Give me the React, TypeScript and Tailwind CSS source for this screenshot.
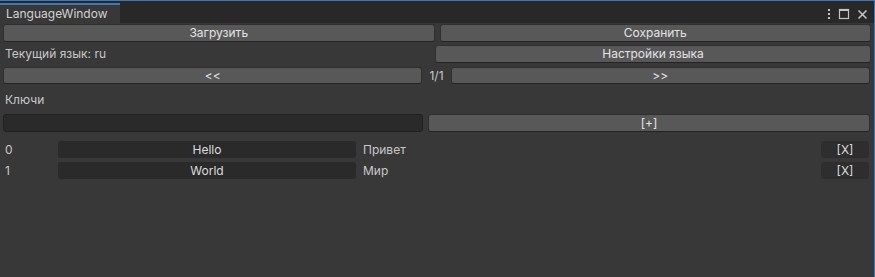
import React from 'react';

const font = { fontFamily: 'Inter, "Noto Sans", sans-serif' };

function Btn({ children, className = '' }: { children: React.ReactNode; className?: string }) {
  return (
    <div
      className={`flex items-center justify-center rounded-[3px] border border-[#303030] border-b-[#242424] bg-[#585858] text-[12px] text-[#e4e4e4] ${className}`}
    >
      {children}
    </div>
  );
}

function KeyRow({ index, keyName, value }: { index: number; keyName: string; value: string }) {
  return (
    <div className="flex h-[17px] items-center pl-[5px] pr-[5px]">
      <div className="w-[53px] text-[12px] text-[#c8c8c8]">{index}</div>
      <div className="flex h-full w-[298px] items-center justify-center rounded-[3px] bg-[#2a2a2a] text-[12px] text-[#dcdcdc]">
        {keyName}
      </div>
      <div className="ml-[7px] flex-1 text-[12px] text-[#c8c8c8]">{value}</div>
      <div className="flex h-full w-[48px] items-center justify-center rounded-[3px] bg-[#2e2e2e] text-[12px] text-[#dcdcdc]">
        [X]
      </div>
    </div>
  );
}

function App() {
  return (
    <div className="flex h-[277px] w-[875px] flex-col overflow-hidden border-t border-r border-[#3a79bb] bg-[#383838]" style={font}>
      {/* tab bar */}
      <div className="flex h-[22px] items-end bg-[#282828]">
        <div className="flex h-[20px] w-[120px] items-center border-t-2 border-[#3a79bb] bg-[#383838] pl-[6px] text-[12px] text-[#d2d2d2]">
          LanguageWindow
        </div>
        <div className="flex-1" />
        <div className="mb-[3px] mr-[6px] flex items-center gap-[7px] text-[#c4c4c4]">
          <svg width="4" height="12" viewBox="0 0 4 12">
            <rect x="1" y="1" width="2" height="2" fill="currentColor" />
            <rect x="1" y="5" width="2" height="2" fill="currentColor" />
            <rect x="1" y="9" width="2" height="2" fill="currentColor" />
          </svg>
          <svg width="12" height="12" viewBox="0 0 12 12">
            <rect x="1.5" y="1.5" width="9" height="9" fill="none" stroke="currentColor" strokeWidth="1.2" />
            <rect x="1" y="1" width="10" height="2" fill="currentColor" />
          </svg>
          <svg width="11" height="11" viewBox="0 0 11 11">
            <path d="M1.5 1.5 L9.5 9.5 M9.5 1.5 L1.5 9.5" stroke="currentColor" strokeWidth="1.6" />
          </svg>
        </div>
      </div>

      {/* load / save */}
      <div className="mt-[1px] flex h-[18px] gap-[5px] pl-[3px] pr-[3px]">
        <Btn className="flex-1">Загрузить</Btn>
        <Btn className="flex-1">Сохранить</Btn>
      </div>

      {/* current language */}
      <div className="mt-[3px] flex h-[18px] items-center pl-[5px] pr-[3px]">
        <div className="w-[430px] text-[12px] text-[#c8c8c8]">Текущий язык: ru</div>
        <Btn className="h-full flex-1">Настройки языка</Btn>
      </div>

      {/* paging */}
      <div className="mt-[4px] flex h-[17px] items-center pl-[3px] pr-[4px]">
        <Btn className="h-full flex-1">&lt;&lt;</Btn>
        <div className="px-[7px] text-[12px] text-[#c8c8c8]">1/1</div>
        <Btn className="h-full flex-1">&gt;&gt;</Btn>
      </div>

      {/* keys label */}
      <div className="mt-[4px] flex h-[24px] items-center pl-[5px] text-[12px] text-[#c8c8c8]">Ключи</div>

      {/* new key */}
      <div className="mt-[2px] flex h-[18px] gap-[5px] pl-[3px] pr-[4px]">
        <div className="w-[420px] rounded-[3px] border border-[#212121] bg-[#2a2a2a]" />
        <Btn className="flex-1">[+]</Btn>
      </div>

      {/* keys */}
      <div className="mt-[9px] flex flex-col gap-[4px]">
        <KeyRow index={0} keyName="Hello" value="Привет" />
        <KeyRow index={1} keyName="World" value="Мир" />
      </div>
    </div>
  );
}

export default App;
